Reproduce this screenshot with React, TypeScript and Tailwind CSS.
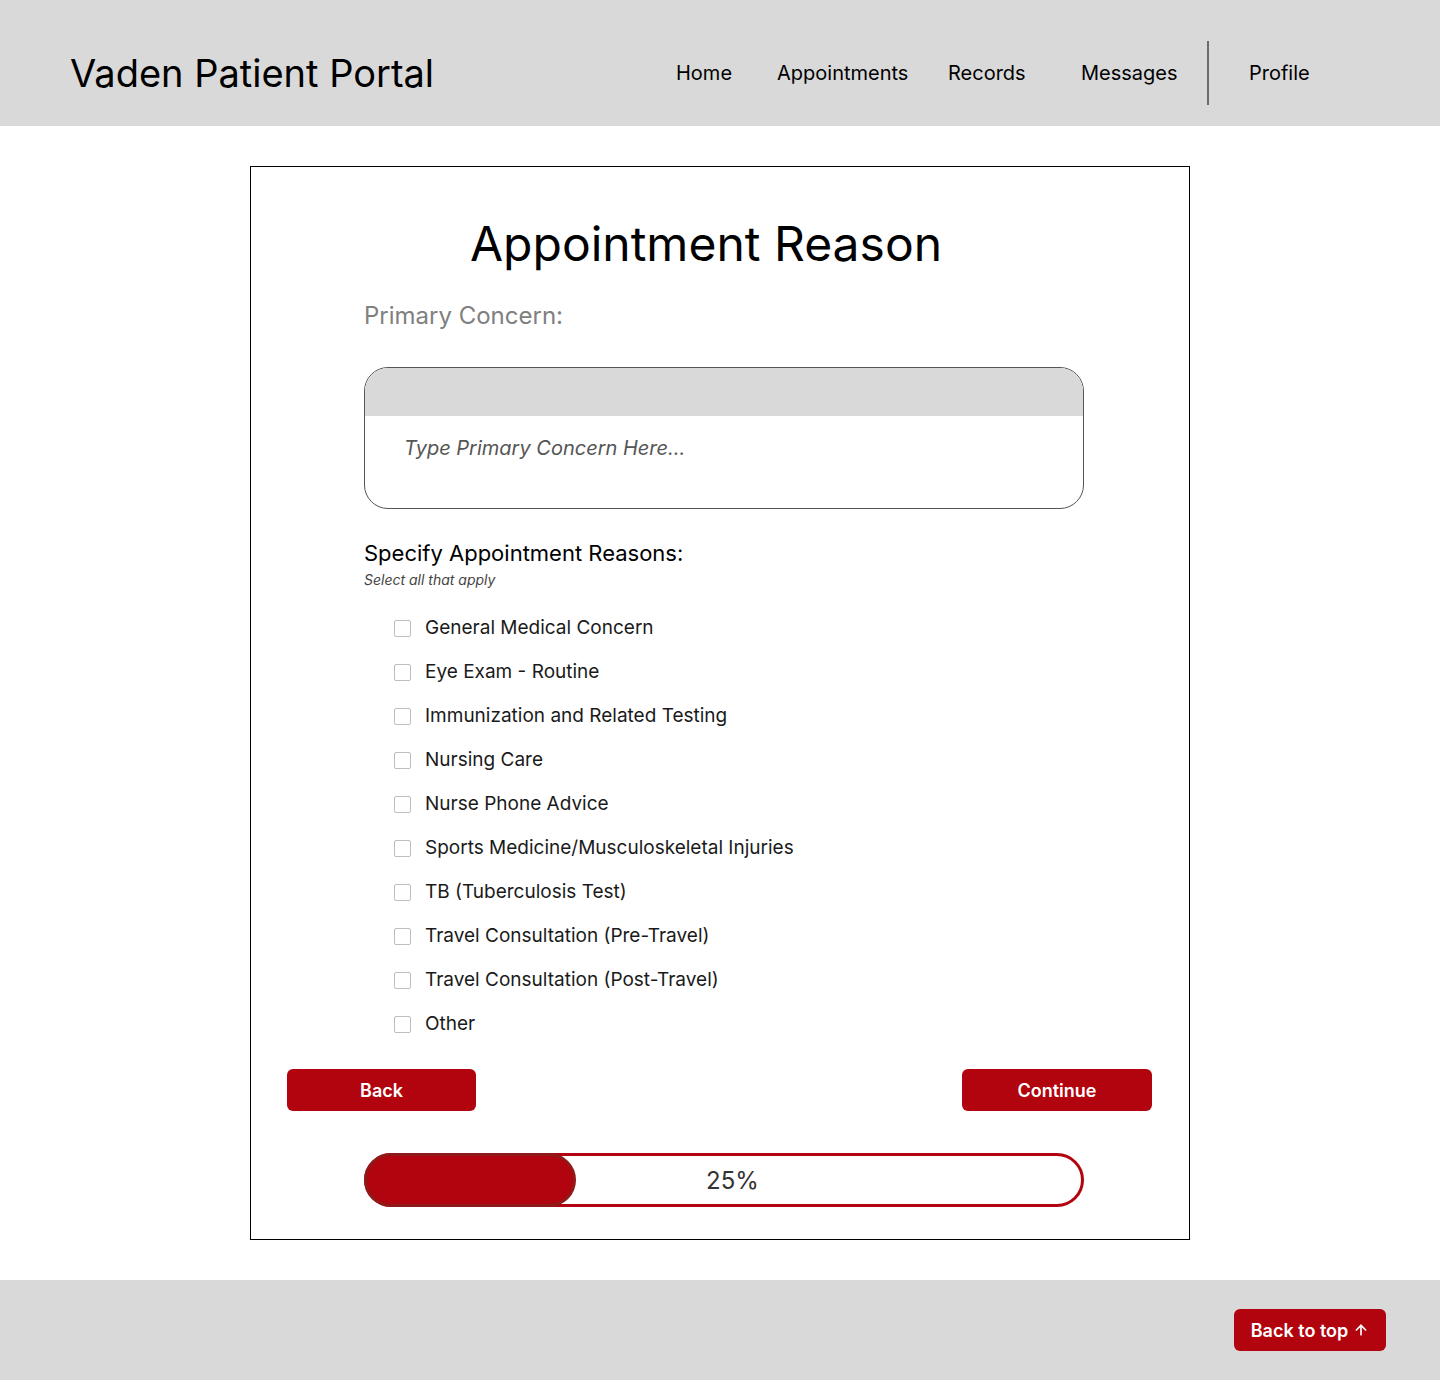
import React from "react";
import { ArrowUp } from "lucide-react";

const reasons = [
  "General Medical Concern",
  "Eye Exam - Routine",
  "Immunization and Related Testing",
  "Nursing Care",
  "Nurse Phone Advice",
  "Sports Medicine/Musculoskeletal Injuries",
  "TB (Tuberculosis Test)",
  "Travel Consultation (Pre-Travel)",
  "Travel Consultation (Post-Travel)",
  "Other",
];

export default function App() {
  return (
    <div className="w-[1440px] bg-white text-black" style={{ fontFamily: "Inter, 'Noto Sans', sans-serif" }}>
      <header className="h-[126px] bg-[#d9d9d9] flex items-center pt-[19px]">
        <div className="w-[676px] pl-[70px] text-[38px] leading-[38px]">Vaden Patient Portal</div>
        <nav className="flex items-center text-[20px] leading-[20px]">
          <span className="w-[101px]">Home</span>
          <span className="w-[171px]">Appointments</span>
          <span className="w-[133px]">Records</span>
          <span className="w-[126px]">Messages</span>
          <span className="w-[2px] h-[64px] bg-[#6b6b6b]"></span>
          <span className="ml-[40px]">Profile</span>
        </nav>
      </header>

      <main className="pt-[40px] pb-[40px]">
        <div className="mx-auto w-[940px] h-[1074px] border border-black flex flex-col">
          <h1 className="mt-[53px] pl-[219px] text-[48px] leading-[48px] font-normal">Appointment Reason</h1>
          <div className="mt-[36px] pl-[113px] text-[24px] leading-[24px] text-[#808080]">Primary Concern:</div>

          <div className="mt-[39px] ml-[113px] w-[720px] h-[142px] border border-[#555] rounded-[24px] overflow-hidden flex flex-col">
            <div className="h-[48px] bg-[#d9d9d9] shrink-0"></div>
            <div className="pt-[22px] pl-[39px] text-[20px] leading-[20px] italic text-[#555]">Type Primary Concern Here...</div>
          </div>

          <div className="mt-[33px] pl-[113px] text-[22px] leading-[22px]">Specify Appointment Reasons:</div>
          <div className="mt-[9px] pl-[113px] text-[14px] leading-[14px] italic text-[#444]">Select all that apply</div>

          <div className="mt-[19px] pl-[143px] flex flex-col">
            {reasons.map((r) => (
              <label key={r} className="h-[44px] flex items-center">
                <span className="w-[17px] h-[17px] border border-[#bdbdbd] rounded-[2px] bg-white shrink-0"></span>
                <span className="ml-[14px] text-[19px] leading-[20px] text-[#1a1a1a]">{r}</span>
              </label>
            ))}
          </div>

          <div className="mt-[23px] pl-[36px] pr-[37px] flex justify-between">
            <button className="w-[189px] h-[42px] rounded-[6px] bg-[#b1040e] text-white text-[18px] font-semibold">Back</button>
            <button className="w-[190px] h-[42px] rounded-[6px] bg-[#b1040e] text-white text-[18px] font-semibold">Continue</button>
          </div>

          <div className="mt-[42px] ml-[113px] w-[720px] h-[54px] rounded-full border-[3px] border-[#b1040e] relative flex items-center">
            <div className="absolute left-[-3px] top-[-3px] w-[212px] h-[54px] rounded-full bg-[#b1040e] border-[3px] border-[#8e1a1a]"></div>
            <span className="relative flex-1 text-center pl-[17px] pt-[2px] text-[24px] leading-[24px] text-[#333]">25%</span>
          </div>
        </div>
      </main>

      <footer className="h-[100px] bg-[#d9d9d9] flex justify-end items-start pt-[29px] pr-[54px]">
        <button className="w-[152px] h-[42px] rounded-[6px] bg-[#b1040e] text-white text-[18px] font-semibold flex items-center justify-center gap-[5px]">
          Back to top <ArrowUp size={16} strokeWidth={2.5} />
        </button>
      </footer>
    </div>
  );
}
